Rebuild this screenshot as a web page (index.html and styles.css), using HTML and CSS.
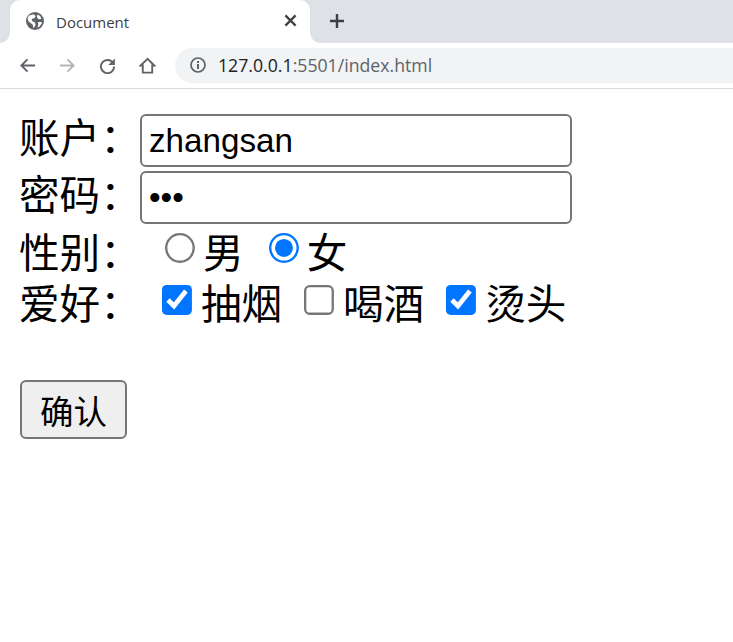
FILE: index.html
```html
<!DOCTYPE html>
<html lang="zh">
<head>
<meta charset="utf-8">
<title>Document</title>
<link rel="stylesheet" href="styles.css">
</head>
<body>
<header class="browser">
  <div class="tabstrip">
    <div class="tab">
      <svg class="favicon" viewBox="0 0 18 18"><circle cx="9" cy="9" r="9" fill="#5f6368"/><path d="M3 3.500 7.500 2.200 9.800 4 8 6.500 5.800 6.800 6 9l3 1.600.6 2.400-2 3.200-1-3.600L2.600 9.500 1.500 6.500z M11.500 2.600l2.600 1.400 1.500 3-3.200.2-1.500-2.300z M12 10h3.500l.3 1.500-2.800 3.500-1.500.5.800-3z" fill="#fff"/></svg>
      <span class="tab-title">Document</span>
      <svg class="tab-close" viewBox="0 0 14 14"><path d="M1.500 1.500 12.500 12.500M12.500 1.500 1.500 12.500" stroke="#3c4043" stroke-width="2.400"/></svg>
    </div>
    <svg class="newtab" viewBox="0 0 16 16"><path d="M8 1v14M1 8h14" stroke="#3c4043" stroke-width="2.400"/></svg>
  </div>
  <div class="toolbar">
    <svg class="nav nav-back" viewBox="0 0 18 18"><path d="M17 9H3M9 2.500 2.500 9 9 15.500" fill="none" stroke="#5f6368" stroke-width="2"/></svg>
    <svg class="nav nav-fwd" viewBox="0 0 18 18"><path d="M1 9h14M9 2.500 15.500 9 9 15.500" fill="none" stroke="#b4b6b9" stroke-width="2"/></svg>
    <svg class="nav nav-reload" viewBox="0 0 18 18"><path d="M15 6.500A7 7 0 1 0 16 10" fill="none" stroke="#5f6368" stroke-width="2"/><path d="M16.800 1.500v7h-7z" fill="#5f6368"/></svg>
    <svg class="nav nav-home" viewBox="0 0 18 18"><path d="M9 2 1.800 9H4v7.500h10V9h2.200z" fill="none" stroke="#5f6368" stroke-width="2"/></svg>
    <div class="omnibox">
      <svg class="info" viewBox="0 0 16 16"><circle cx="8" cy="8" r="7" fill="none" stroke="#5f6368" stroke-width="1.700"/><path d="M7 7h2v5H7zM7 4h2v2H7z" fill="#5f6368"/></svg>
      <span class="url"><span class="host">127.0.0.1</span>:5501/index.html</span>
    </div>
  </div>
</header>
<form class="form">
  <div class="row row-input">
    <label class="label" for="user">账户：</label>
    <input class="field" id="user" type="text" value="zhangsan">
  </div>
  <div class="row row-input">
    <label class="label" for="pass">密码：</label>
    <input class="field" id="pass" type="password" value="123">
  </div>
  <div class="row row-radio">
    <span class="label">性别：</span>
    <input class="radio radio-first" type="radio" name="sex"><span class="opt opt-radio">男</span>
    <input class="radio" type="radio" name="sex" checked><span class="opt opt-radio">女</span>
  </div>
  <div class="row row-check">
    <span class="label">爱好：</span>
    <input class="check check-first" type="checkbox" checked><span class="opt">抽烟</span>
    <input class="check" type="checkbox"><span class="opt">喝酒</span>
    <input class="check" type="checkbox" checked><span class="opt">烫头</span>
  </div>
  <button class="submit" type="button">确认</button>
</form>
</body>
</html>
```
FILE: styles.css
```css
* { box-sizing: border-box; }
html, body { margin: 0; padding: 0; }
body {
  background: #fff;
  color: #000;
  font-family: "Liberation Sans", "Noto Sans CJK SC", sans-serif;
  overflow: hidden;
}
.browser { border-bottom: 1px solid #dadce0; height: 89px; }
.tabstrip {
  display: flex;
  align-items: center;
  height: 43px;
  background: #dee1e6;
  padding-left: 10px;
}
.tab {
  position: relative;
  display: flex;
  align-items: center;
  width: 300px;
  height: 43px;
  background: #fff;
  border-radius: 10px 10px 0 0;
  padding-left: 16px;
}
.tab::before, .tab::after {
  content: "";
  position: absolute;
  bottom: 0;
  width: 10px;
  height: 10px;
}
.tab::before { left: -10px; background: radial-gradient(circle at 0 0, #dee1e6 9.500px, #fff 10px); }
.tab::after { right: -10px; background: radial-gradient(circle at 100% 0, #dee1e6 9.500px, #fff 10px); }
.favicon { width: 18px; height: 18px; flex: none; margin-top: -1px; }
.tab-title {
  margin-left: 12px;
  font: 15px/20px "Open Sans", sans-serif;
  color: #3c4043;
  flex: 1;
}
.tab-close { width: 13px; height: 13px; margin-right: 13px; margin-top: -2px; }
.newtab { width: 16px; height: 16px; margin-left: 19px; margin-top: -1px; }
.toolbar { display: flex; align-items: center; height: 45px; padding-left: 19px; }
.nav { width: 17px; height: 17px; flex: none; margin-top: -1px; }
.nav-fwd { margin-left: 23px; }
.nav-reload { margin-left: 23px; }
.nav-home { margin-left: 23px; }
.omnibox {
  display: flex;
  align-items: center;
  flex: 1;
  height: 35px;
  margin-left: 19px;
  margin-top: -1px;
  background: #f1f3f4;
  border-radius: 18px 0 0 18px;
  padding-left: 15px;
}
.info { width: 16px; height: 16px; flex: none; }
.url {
  margin-left: 12px;
  font: 17.700px/24px "Open Sans", sans-serif;
  color: #5f6368;
  white-space: nowrap;
}
.host { color: #202124; }
.form { padding: 25px 0 0 20px; }
.row { display: flex; align-items: center; }
.row-input { height: 53px; margin-bottom: 4px; }
.row-input .label { margin-bottom: 10px; }
.row-radio { height: 55px; margin-top: -5px; }
.row-check { height: 48px; }
.label {
  flex: none;
  width: 120px;
  font-size: 40.600px;
  line-height: 48px;
  font-family: "Noto Sans CJK SC", sans-serif;
  white-space: nowrap;
  margin-left: -1px;
  margin-right: 1px;
}
.field {
  width: 432px;
  height: 53px;
  border: 2px solid #767676;
  border-radius: 6px;
  padding: 0 7px;
  font-family: "Liberation Sans", sans-serif;
  font-size: 33.200px;
  color: #000;
  background: #fff;
  outline: none;
}
.radio {
  flex: none;
  zoom: 2.300;
  width: 13px;
  height: 13px;
  margin: 0 0 2px 11px;
}
.radio-first { margin-left: 10.900px; }
.check {
  flex: none;
  zoom: 2.300;
  width: 13px;
  height: 13px;
  margin: 0 0 2px 9.600px;
}
.check-first { margin-left: 9.600px; }
.opt {
  font-size: 40.600px;
  line-height: 48px;
  margin-left: 9px;
  font-family: "Noto Sans CJK SC", sans-serif;
  white-space: nowrap;
}
.opt-radio { margin-left: 8px; }
.submit {
  display: block;
  width: 107px;
  height: 59px;
  margin-top: 54px;
  padding: 0;
  border: 2px solid #767676;
  border-radius: 6px;
  background: #efefef;
  color: #000;
  font-size: 33.500px;
  font-family: "Noto Sans CJK SC", sans-serif;
}
```
